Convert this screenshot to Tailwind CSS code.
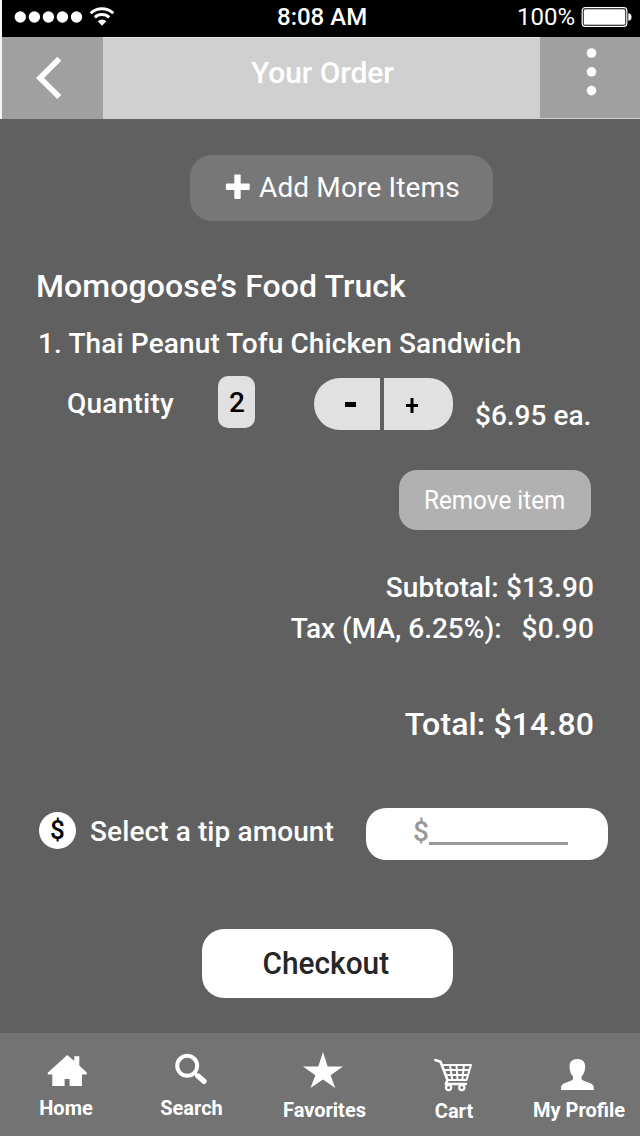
<!DOCTYPE html>
<html lang="en">
<head>
<meta charset="utf-8">
<title>Your Order</title>
<script src="https://cdn.jsdelivr.net/npm/@tailwindcss/browser@4"></script>
</head>
<body class="w-[640px] h-[1136px] overflow-hidden bg-[#606060] text-white font-medium font-['Roboto',sans-serif] whitespace-nowrap">
<div class="flex flex-col w-[640px] h-[1136px]">

  <!-- Status bar -->
  <header class="flex items-start h-[37px] bg-black border-l-2 border-[#f4f4f4] shrink-0 leading-[34px] text-[24px]">
    <svg class="mt-[5px] ml-[12px]" width="102" height="24" viewBox="14 5 102 24" fill="#fff">
      <circle cx="20.3" cy="17" r="5.7"/><circle cx="34.4" cy="17" r="5.7"/><circle cx="48.4" cy="17" r="5.7"/><circle cx="62.4" cy="17" r="5.7"/><circle cx="76.5" cy="17" r="5.7"/>
      <g fill="none" stroke="#fff" stroke-width="2.9"><path d="M90.7 13.2A16.5 16.5 0 0 1 113.3 13.2"/><path d="M94.8 17.4A10.4 10.4 0 0 1 109.2 17.4"/></g>
      <path d="M102 25.7L97.7 21.2A6.4 6.4 0 0 1 106.3 21.2Z"/>
    </svg>
    <span class="ml-[161px] w-[92px]">8:08 AM</span>
    <span class="ml-[148px] w-[60px] font-normal">100%</span>
    <svg class="mt-[5px] ml-[3px]" width="52" height="24" viewBox="580 5 52 24">
      <rect x="582.2" y="7.7" width="44.6" height="18.6" rx="3" fill="none" stroke="#fff" stroke-width="1.2"/>
      <rect x="583.7" y="9.2" width="41.6" height="15.6" rx="1.6" fill="#fff"/>
      <path d="M628.3 13.2a3.2 3.8 0 0 1 0 7.6z" fill="#fff"/>
    </svg>
  </header>

  <!-- Title bar -->
  <div class="flex h-[82px] shrink-0 bg-[#d0d0d0] border-l-2 border-[#f4f4f4]">
    <button class="w-[101px] h-[82px] bg-[#a0a0a0]">
      <svg width="101" height="82" viewBox="2 37 101 82" fill="none" stroke="#fff" stroke-width="5.6"><path d="M59.3 58.8L40 78L59.3 97"/></svg>
    </button>
    <h1 class="w-[437px] h-[82px] pl-[148px] pt-[15px] text-[30px] leading-[40px] tracking-[-0.1px] border-t border-t-[#e6e6e6]">Your Order</h1>
    <button class="w-[100px] h-[82px] bg-[#a0a0a0] border-b border-[#d0d0d0]">
      <svg width="100" height="81" viewBox="540 37 100 81" fill="#fff"><circle cx="591.5" cy="53" r="4.8"/><circle cx="591.5" cy="71.8" r="4.8"/><circle cx="591.5" cy="90.6" r="4.8"/></svg>
    </button>
  </div>

  <!-- Order -->
  <main class="flex flex-col items-start h-[914px] shrink-0 text-[28px] leading-[36px]">
    <button class="flex items-center mt-[36px] ml-[190px] w-[303px] h-[66px] rounded-[22px] bg-[#777] font-normal pl-[35px] tracking-[0.14px]">
      <svg class="mr-[9px] -mt-[2px]" width="25" height="26" viewBox="0 0 25 26" fill="#fff"><rect x="0.9" y="9.6" width="23.8" height="6.4" rx="1"/><rect x="9.3" y="0.5" width="6.4" height="24.6" rx="1"/></svg>
      <span>Add More Items</span>
    </button>
    <h2 class="mt-[45px] ml-[36px] text-[32px] leading-[40px] tracking-[0.1px]">Momogoose’s Food Truck</h2>
    <p class="mt-[20px] ml-[38px] tracking-[0.13px]">1. Thai Peanut Tofu Chicken Sandwich</p>
    <div class="flex items-start mt-[14px] h-[54px]">
      <span class="mt-[10px] ml-[67px] w-[151px] tracking-[0.25px]">Quantity</span>
      <span class="w-[37px] h-[52px] rounded-[10px] bg-[#e1e1e1] text-black text-center leading-[52px] pt-px pl-px">2</span>
      <button class="ml-[59px] mt-[2px] w-[66px] h-[52px] rounded-l-[26px] bg-[#e1e1e1] pl-[31px]"><span class="block w-[11px] h-[5px] bg-black"></span></button>
      <button class="ml-[4px] mt-[2px] w-[69px] h-[52px] rounded-r-[24px] bg-[#e1e1e1]"><svg class="ml-[22px] mt-[2px]" width="12" height="15" viewBox="0 0 12 15" stroke="#000" stroke-width="3"><path d="M0 7.5H12M6 0V15"/></svg></button>
      <span class="mt-[22px] ml-[22px]">$6.95 ea.</span>
    </div>
    <button class="mt-[40px] ml-[399px] w-[192px] h-[60px] rounded-[18px] bg-[#b1b1b1] text-[26px] font-normal"><span class="inline-block scale-x-[0.935]">Remove item</span></button>
    <div class="mt-[37px] w-[594px] text-right leading-[41px]">
      <p class="tracking-[0.12px]">Subtotal: $13.90</p>
      <p><span class="mr-[20px]">Tax (MA, 6.25%):</span><span class="tracking-[0.2px]">$0.90</span></p>
    </div>
    <p class="mt-[55px] w-[594px] text-right text-[32px] leading-[40px] tracking-[0.12px]">Total: $14.80</p>
    <div class="flex items-start mt-[64px] h-[52px]">
      <span class="ml-[39px] mt-[4px] w-[37px] h-[37px] rounded-full bg-white text-black text-center leading-[37px] text-[26px]">$</span>
      <span class="ml-[14px] mt-[6px] w-[276px] tracking-[0.1px]">Select a tip amount</span>
      <span class="flex w-[242px] h-[52px] rounded-[20px] bg-white text-[#999] pl-[47px] pt-[6px]">$<span class="mt-[28px] w-[139px] h-[3px] bg-[#999]"></span></span>
    </div>
    <button class="mt-[69px] ml-[202px] w-[251px] h-[69px] rounded-[22px] bg-white text-[#262626] text-[31px]"><span class="inline-block scale-x-[0.962] -ml-[3px]">Checkout</span></button>
  </main>

  <!-- Tab bar -->
  <nav class="flex h-[103px] shrink-0 bg-[#737373] text-[20px] leading-[24px] font-bold">
    <a class="flex flex-col items-center w-[132px]">
      <svg class="mt-[20px] ml-px" width="40" height="34" viewBox="47 1053 40 34" fill="#fff"><path d="M67.3 1055L74.3 1061V1056.3H79.3V1065.6L86.7 1072.5V1074.5H82V1086H69.6V1079H64.6V1086H52.3V1074.5H47.7V1072.8Z"/></svg>
      <span class="mt-[9px]">Home</span>
    </a>
    <a class="flex flex-col items-center w-[119px]">
      <svg class="mt-[20px] mr-[2px]" width="34" height="34" viewBox="174 1053 34 34" fill="none" stroke="#fff"><circle cx="187.2" cy="1065.8" r="10" stroke-width="4"/><path d="M194.3 1073L197.5 1076" stroke-width="3"/><path d="M198 1076L204 1081.3" stroke-width="5.4" stroke-linecap="round"/></svg>
      <span class="mt-[9px]">Search</span>
    </a>
    <a class="flex flex-col items-center w-[147px]">
      <svg class="mt-[18px] mr-[3px]" width="42" height="38" viewBox="302 1051 42 38" fill="#fff"><path d="M323 1052L327.7 1066.4H343L330.6 1075.2L335.2 1088L323 1079.6L310.5 1088L315.4 1075.2L303 1066.4H318.3Z"/></svg>
      <span class="mt-[9px]">Favorites</span>
    </a>
    <a class="flex flex-col items-center w-[112px]">
      <svg class="mt-[25px] mr-[3px]" width="40" height="34" viewBox="433 1058 40 34" fill="none" stroke="#fff" stroke-width="2" stroke-linecap="round" stroke-linejoin="round"><path d="M435.3 1060L440.5 1061.8L447.5 1080L445.8 1084H466" stroke-width="2.6"/><path d="M442.5 1065H471L466.5 1080H447.5M444 1070H469.5M446 1075H468M450 1065L452.3 1080M456.5 1065L457.5 1080M464 1065L462.3 1080"/><circle cx="448.6" cy="1087.6" r="2.6" stroke-width="2.2"/><circle cx="461.8" cy="1087.6" r="2.6" stroke-width="2.2"/></svg>
      <span class="mt-[7px]">Cart</span>
    </a>
    <a class="flex flex-col items-center w-[130px] pl-[8px]">
      <svg class="mt-[25px] mr-[4px]" width="34" height="33" viewBox="560 1058 34 33" fill="#fff"><path d="M577.3 1059C582.5 1059 585.2 1062 585.2 1066.5C585.2 1071 583.6 1074.5 581.6 1076.5V1079.3C583.5 1082 593.8 1082.3 593.8 1087.5V1090H561V1087.5C561 1082.3 571 1082 573 1079.3V1076.5C571 1074.5 569.5 1071 569.5 1066.5C569.5 1062 572.2 1059 577.3 1059Z"/></svg>
      <span class="mt-[7px]">My Profile</span>
    </a>
  </nav>
</div>
</body>
</html>
